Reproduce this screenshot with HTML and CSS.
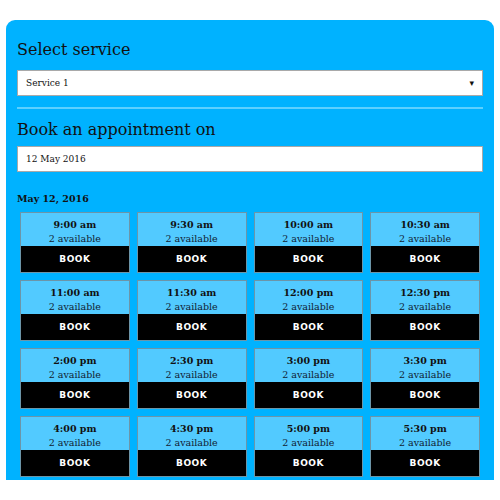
FILE: index.html
```html
<!DOCTYPE html>
<html lang="en">

<head>
    <meta charset="UTF-8">
    <meta name="viewport" content="width=device-width, initial-scale=1.0">
    <title>Book an appointment</title>
    <link rel="stylesheet" href="styles.css">
</head>

<body>
    <div class="booking">
        <h2>Select service</h2>
        <div class="field select-field">
            <span>Service 1</span>
            <span class="arrow">&#9662;</span>
        </div>

        <hr class="divider">

        <h2 class="date-title">Book an appointment on</h2>
        <div class="field">12 May 2016</div>

        <h4 class="day">May 12, 2016</h4>

        <div class="slots">
            <div class="slot"><div class="info"><b>9:00 am</b><span>2 available</span></div><button>BOOK</button></div>
            <div class="slot"><div class="info"><b>9:30 am</b><span>2 available</span></div><button>BOOK</button></div>
            <div class="slot"><div class="info"><b>10:00 am</b><span>2 available</span></div><button>BOOK</button></div>
            <div class="slot"><div class="info"><b>10:30 am</b><span>2 available</span></div><button>BOOK</button></div>

            <div class="slot"><div class="info"><b>11:00 am</b><span>2 available</span></div><button>BOOK</button></div>
            <div class="slot"><div class="info"><b>11:30 am</b><span>2 available</span></div><button>BOOK</button></div>
            <div class="slot"><div class="info"><b>12:00 pm</b><span>2 available</span></div><button>BOOK</button></div>
            <div class="slot"><div class="info"><b>12:30 pm</b><span>2 available</span></div><button>BOOK</button></div>

            <div class="slot"><div class="info"><b>2:00 pm</b><span>2 available</span></div><button>BOOK</button></div>
            <div class="slot"><div class="info"><b>2:30 pm</b><span>2 available</span></div><button>BOOK</button></div>
            <div class="slot"><div class="info"><b>3:00 pm</b><span>2 available</span></div><button>BOOK</button></div>
            <div class="slot"><div class="info"><b>3:30 pm</b><span>2 available</span></div><button>BOOK</button></div>

            <div class="slot"><div class="info"><b>4:00 pm</b><span>2 available</span></div><button>BOOK</button></div>
            <div class="slot"><div class="info"><b>4:30 pm</b><span>2 available</span></div><button>BOOK</button></div>
            <div class="slot"><div class="info"><b>5:00 pm</b><span>2 available</span></div><button>BOOK</button></div>
            <div class="slot"><div class="info"><b>5:30 pm</b><span>2 available</span></div><button>BOOK</button></div>
        </div>
    </div>
</body>

</html>
```

FILE: styles.css
```css
* {
    margin: 0;
    padding: 0;
    box-sizing: border-box;
}

body {
    font-family: "DejaVu Serif", serif;
    background-color: #fff;
    color: #111;
    padding: 20px 6px 0;
}

.booking {
    background-color: #00b2ff;
    border-radius: 9px 9px 0 0;
    padding: 19px 11px 7px;
    height: 460px;
    overflow: hidden;
}

.booking h2 {
    font-size: 16px;
    font-weight: normal;
    line-height: 21px;
    margin-bottom: 10px;
}

.booking .date-title {
    margin-bottom: 6px;
}

.field {
    background-color: #fff;
    border: 1px solid #a9a9a9;
    height: 26px;
    padding: 0 8px;
    font-size: 9px;
    display: flex;
    align-items: center;
    justify-content: space-between;
}

.arrow {
    font-size: 9px;
    font-family: "DejaVu Sans", sans-serif;
}

.divider {
    border: none;
    height: 2px;
    background-color: #5dd0ff;
    margin: 11px 0 10px;
}

.day {
    font-size: 9.5px;
    font-weight: bold;
    margin: 21px 0 8px;
}

.slots {
    display: grid;
    grid-template-columns: repeat(4, 1fr);
    gap: 7px;
    padding: 0 3px;
}

.slot {
    border: 1px solid #6c95a8;
    background-color: #52caff;
    height: 61px;
    display: flex;
    flex-direction: column;
}

.info {
    flex: 1;
    display: flex;
    flex-direction: column;
    align-items: center;
    justify-content: center;
    font-size: 9.5px;
    line-height: 14px;
    padding-top: 5px;
}

.info span {
    color: #123;
}

.slot button {
    height: 27px;
    border: none;
    background-color: #000;
    color: #fff;
    font-family: "DejaVu Sans", sans-serif;
    font-weight: bold;
    font-size: 9px;
    letter-spacing: 0.5px;
}
```
